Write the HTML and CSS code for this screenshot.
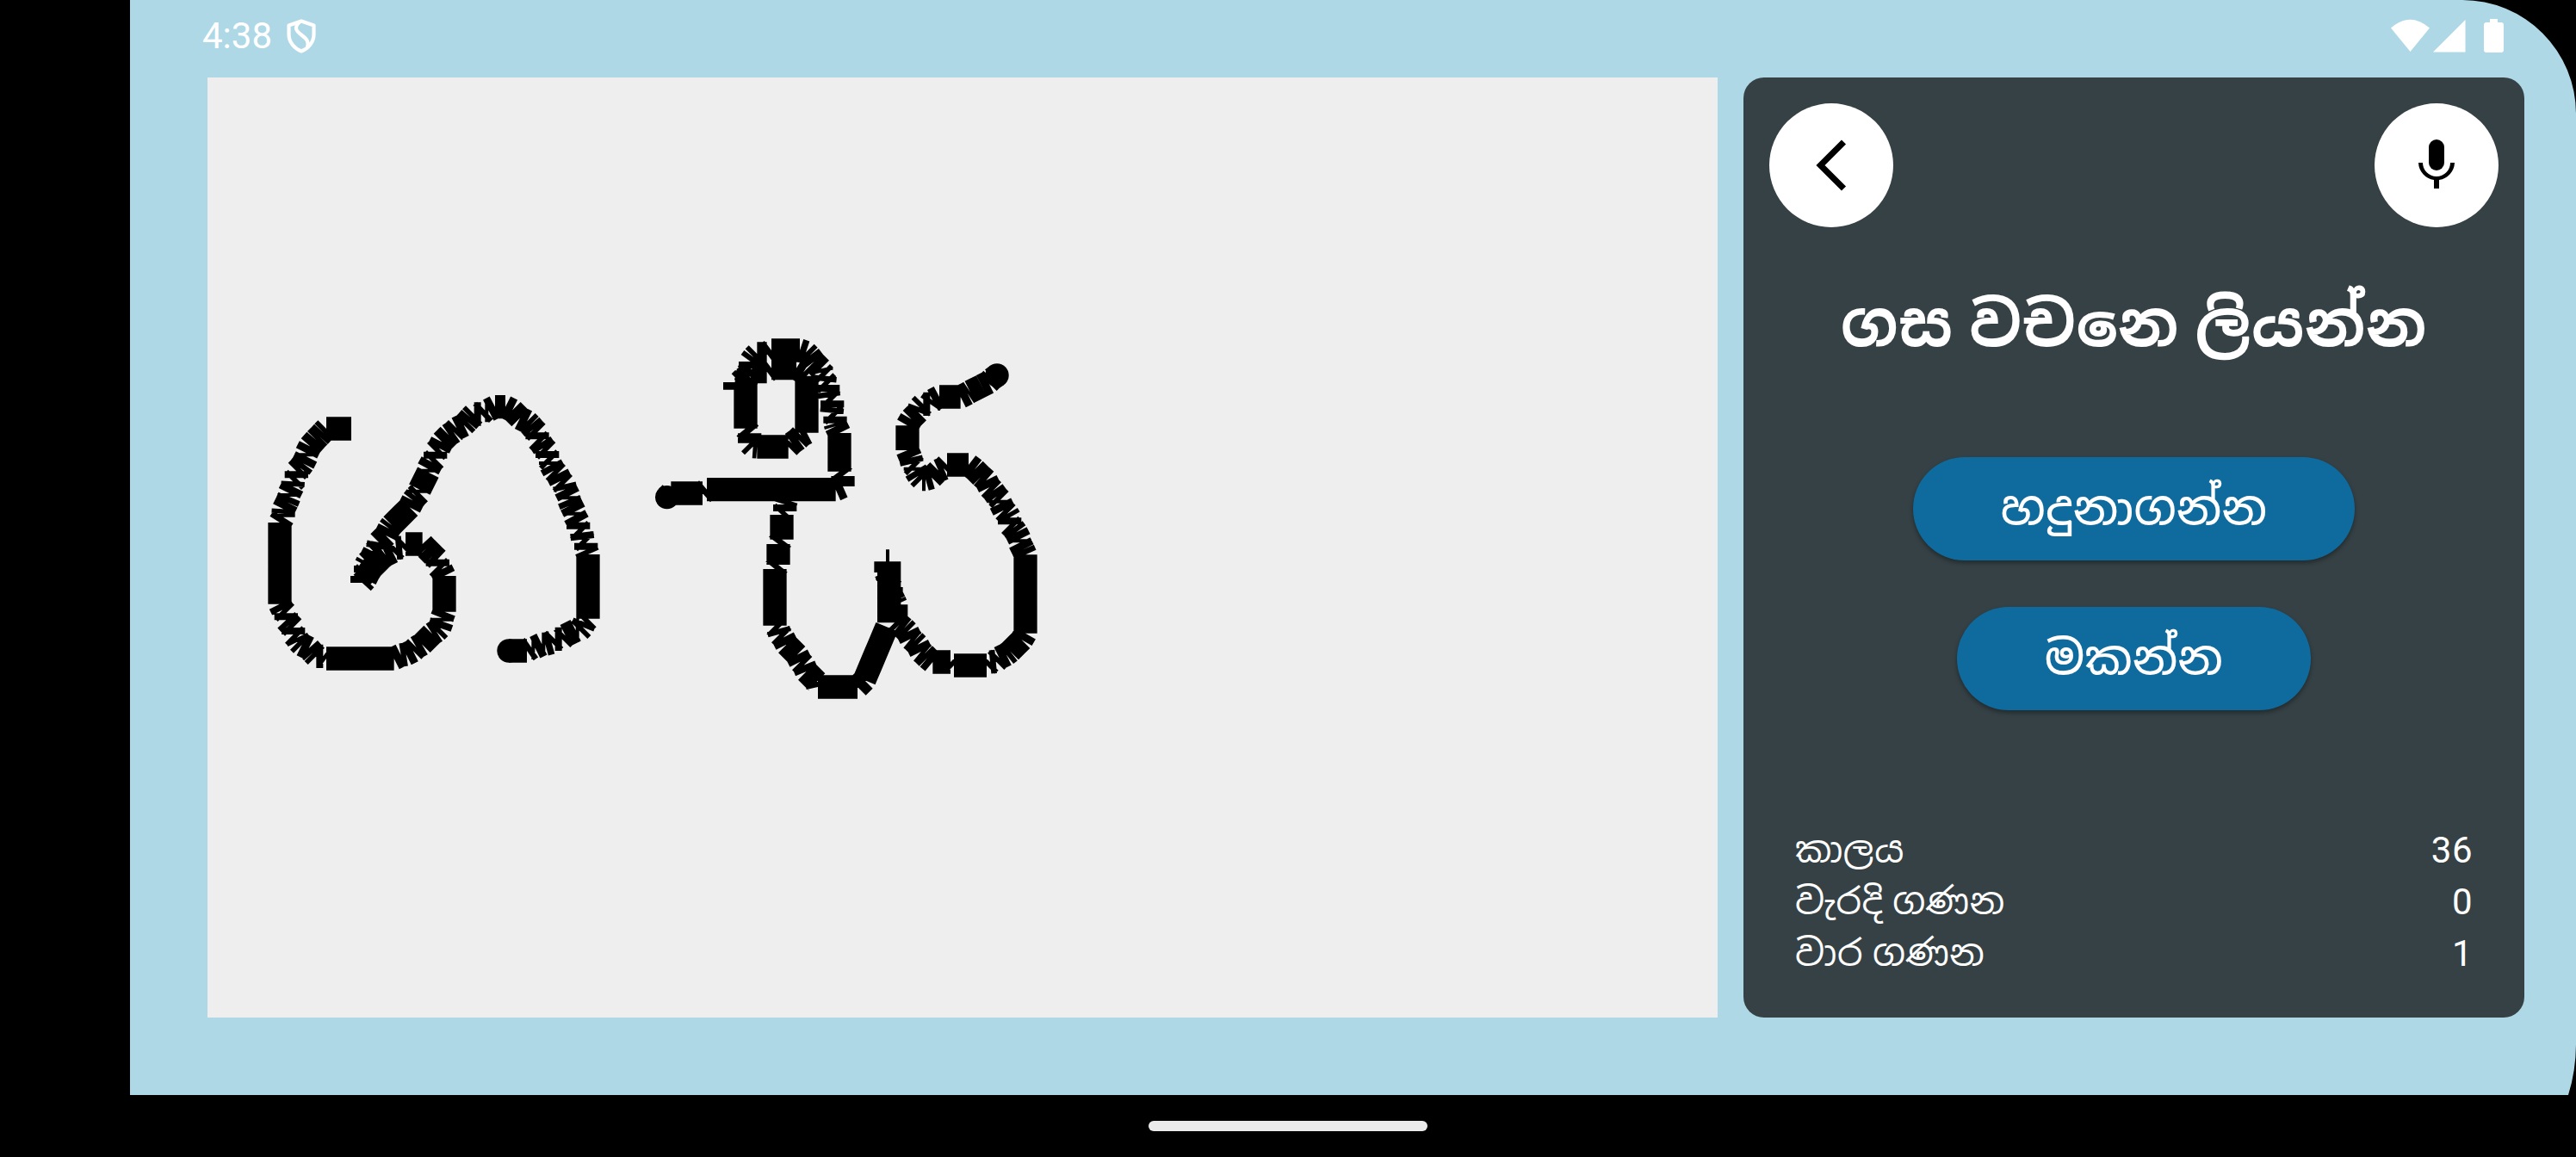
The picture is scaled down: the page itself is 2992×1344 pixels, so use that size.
FILE: index.html
```html
<!DOCTYPE html>
<html lang="si">
<head>
<meta charset="utf-8">
<title>ගස වචනෙ ලියන්න</title>
<link rel="stylesheet" href="styles.css">
</head>
<body>
<div class="screen">
  <header class="status">
    <span class="clock">4:38</span>
    <svg class="shield" viewBox="0 0 34 40" fill="none" stroke="#fff" stroke-width="4.2" stroke-linejoin="round"><path d="M17 2.5 31.500 7.500V18C31.500 27 25 34.500 17 37.500 9 34.500 2.500 27 2.500 18V7.500Z"/><path d="M15 3.500C8 10 11 14 17 18.500S26 26 24 33"/></svg>
    <svg class="signals" viewBox="0 0 132 40" fill="#fff"><path d="M0 10.500Q22 -9 45 10.500L22.500 38Z"/><path d="M49 38.500H86.500V1Z"/><path d="M115 0h9v4h4a3 3 0 0 1 3 3v29a3 3 0 0 1-3 3h-17a3 3 0 0 1-3-3V7a3 3 0 0 1 3-3h4z"/></svg>
  </header>
  <main class="work">
    <svg class="pad" viewBox="241 90 1754 1092"><g id="ink"></g></svg>
    <section class="card">
      <div class="tools">
        <button class="round" aria-label="back"><svg viewBox="0 0 144 144" fill="none" stroke="#000" stroke-width="7.200"><path d="M86.500 45 59.500 72 86.500 99"/></svg></button>
        <button class="round" aria-label="mic"><svg viewBox="0 0 144 144"><rect x="63" y="42" width="18" height="36" rx="9"/><path d="M51 69H56A16 16 0 0 0 88 69H93A21 21 0 0 1 75 89V99H69V89A21 21 0 0 1 51 69Z"/></svg></button>
      </div>
      <h1 class="title">ගස වචනෙ ලියන්න</h1>
      <div class="actions">
        <button class="pill check">හදුනාගන්න</button>
        <button class="pill clear">මකන්න</button>
      </div>
      <dl class="stats">
        <div><dt>කාලය</dt><dd>36</dd></div>
        <div><dt>වැරදි ගණන</dt><dd>0</dd></div>
        <div><dt>වාර ගණන</dt><dd>1</dd></div>
      </dl>
    </section>
  </main>
</div>
<footer class="nav"><span class="handle"></span></footer>
<script src="ink.js"></script>
</body>
</html>
```
FILE: ink.js
```js
// Touch strokes, recorded in thirds of a pixel from each origin.
const strokes = [
  { origin: [280, 440], points: "384,174 297,174 272,200 240,235 205,310 180,375 160,430 147,470 135,501 135,773 145,805 170,855 200,915 250,955 297,975 533,975 575,960 630,925 680,880 700,845 708,812 708,687 697,665 670,615 632,576 573,576 540,590 490,625 445,675 422,711 422,687 440,640 480,570 525,510 575,460 610,410 640,350 665,290 700,220 740,185 800,135 850,110 885,98 921,98 960,125 1020,175 1055,240 1090,320 1130,385 1150,440 1175,500 1190,560 1209,612 1209,836 1190,865 1130,895 1060,925 996,948 933,948", dots: [[933, 948]] },
  { origin: [740, 370], points: "104,623 118,609 228,609 243,596 692,596 717,585 717,549 705,533 705,411 690,365 680,310 665,255 655,200 640,175 600,130 567,111 468,111 452,123 418,123 395,150 385,190 378,225 378,383 392,400 392,434 418,447 527,447 560,420 591,398 591,200 555,173 468,173 452,185 400,185 370,210 341,222 341,248", dots: [[104, 623]] },
  { origin: [740, 370], points: "520,596 515,648 515,672 504,684 504,758 492,786 492,846 480,873 480,1070 497,1100 545,1160 590,1230 630,1284 768,1284 792,1260", dots: [] },
  { origin: [740, 370], points: "867,846 879,846", dots: [] },
  { origin: [740, 370], points: "878,1060 878,847 867,847 867,885 873,900 885,950 902,997 902,1055 930,1080 965,1125 1000,1170 1030,1197 1092,1197 1104,1209 1218,1209 1250,1195 1300,1160 1340,1120 1353,1097 1353,835 1345,805 1310,730 1290,680 1240,600 1200,550 1155,510 1080,510 1050,530 1005,560 993,560 970,530 953,485 942,459 942,373 955,350 985,310 1030,285 1053,273 1115,273 1160,255 1200,235 1254,198", dots: [[1254, 198]] }
];
const NS = "http://www.w3.org/2000/svg";
const ink = document.getElementById("ink");
const STEP = 19, GRID = 12;
let d = "";
for (const s of strokes) {
  const at = ([x, y]) => (s.origin[0] + x / 3).toFixed(2) + " " + (s.origin[1] + y / 3).toFixed(2);
  const pts = s.points.split(" ").map(p => p.split(",").map(Number));
  for (let i = 1; i < pts.length; i++) {
    const [ax, ay] = pts[i - 1], [bx, by] = pts[i];
    const n = Math.max(1, Math.round(Math.hypot(bx - ax, by - ay) / STEP));
    let prev = [ax, ay];
    for (let k = 1; k <= n; k++) {
      const next = k === n ? [bx, by] : [
        ax + Math.round((bx - ax) * k / n / GRID) * GRID,
        ay + Math.round((by - ay) * k / n / GRID) * GRID];
      d += "M" + at(prev) + "L" + at(next);
      prev = next;
    }
  }
  for (const dot of s.dots) {
    const c = document.createElementNS(NS, "circle");
    c.setAttribute("cx", s.origin[0] + dot[0] / 3);
    c.setAttribute("cy", s.origin[1] + dot[1] / 3);
    c.setAttribute("r", 13.7);
    ink.appendChild(c);
  }
}
for (let k = 0; k < 8; k++) {
  const x = 1004 + 26 * k / 8, y = 790 - 61.7 * k / 8;
  d += `M${x} ${y}L${x + 3.25} ${y - 7.7}`;
}
const path = document.createElementNS(NS, "path");
path.setAttribute("d", d);
path.setAttribute("class", "stroke");
ink.appendChild(path);
```
FILE: styles.css
```css
* { box-sizing: border-box; }
body {
  margin: 0;
  width: 2992px;
  height: 1344px;
  overflow: hidden;
  background: #000;
  color: #fff;
  font-family: Roboto, "Noto Sans Sinhala", "Noto Sans", sans-serif;
}
button { border: 0; padding: 0; font-family: inherit; color: inherit; }
.screen {
  margin-left: 151px;
  width: 2841px;
  height: 1272px;
  background: #afd8e6;
  clip-path: path("M0 0H2709A132 132 0 0 1 2841 132V1212A200 200 0 0 1 2832 1272H0Z");
}
.status {
  display: flex;
  align-items: flex-start;
  height: 90px;
  padding: 22px 83px 0 84px;
}
.clock { font-size: 42px; line-height: 40px; width: 98px; white-space: nowrap; }
.shield { width: 34px; height: 40px; }
.signals { width: 132px; height: 40px; margin-left: auto; }
.work {
  display: flex;
  gap: 30px;
  height: 1092px;
  padding: 0 60px 0 90px;
}
.pad { width: 1754px; height: 1092px; background: #eee; }
.stroke { fill: none; stroke: #000; stroke-width: 27.3px; stroke-linecap: butt; }
.card {
  flex: 1;
  display: flex;
  flex-direction: column;
  padding: 30px;
  border-radius: 24px;
  background: #354145;
}
.tools { display: flex; justify-content: space-between; }
.round { width: 144px; height: 144px; border-radius: 50%; background: #fff; }
.round svg { display: block; width: 144px; height: 144px; }
.title {
  margin: 51px 0 0;
  height: 126px;
  line-height: 126px;
  text-align: center;
  font-size: 72px;
  font-weight: 700;
  letter-spacing: .7px;
  white-space: nowrap;
}
.actions {
  display: flex;
  flex-direction: column;
  align-items: center;
  gap: 54px;
  margin-top: 90px;
}
.pill {
  height: 120px;
  border-radius: 60px;
  background: #0f6b9e;
  font-size: 54px;
  font-weight: 500;
  letter-spacing: .4px;
  line-height: 120px;
  white-space: nowrap;
  box-shadow: 0 3px 5px rgba(0, 0, 0, .35);
}
.check { width: 513px; }
.clear { width: 411px; }
.stats { margin: auto 30px 14px; font-size: 42px; letter-spacing: .5px; }
.stats div { display: flex; justify-content: space-between; height: 60px; line-height: 60px; }
.stats dt, .stats dd { margin: 0; white-space: nowrap; }
.nav { display: flex; justify-content: center; height: 72px; padding-top: 30px; }
.handle { width: 324px; height: 12px; border-radius: 6px; background: #ebebeb; }
```
